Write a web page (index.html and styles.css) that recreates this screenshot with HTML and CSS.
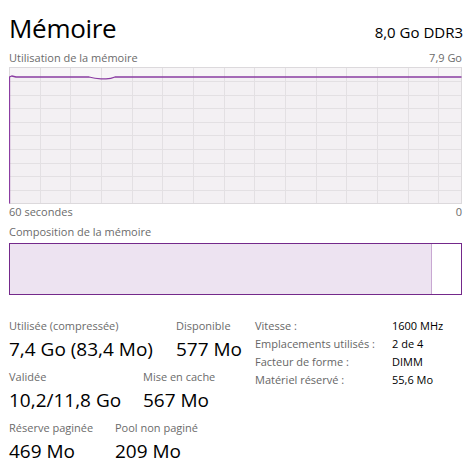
FILE: index.html
```html
<!DOCTYPE html>
<html lang="fr">
<head>
<meta charset="utf-8">
<title>Mémoire</title>
<link rel="stylesheet" href="styles.css">
</head>
<body>
<div class="page">
  <div class="header">
    <div class="title">Mémoire</div>
    <div class="subtitle">8,0 Go DDR3</div>
  </div>

  <div class="caption-row graph-head">
    <span>Utilisation de la mémoire</span>
    <span>7,9 Go</span>
  </div>
  <svg class="graph" width="453" height="137" viewBox="0 0 453 137" shape-rendering="crispEdges">
    <rect x="0" y="0" width="453" height="137" fill="#f7f5f7"/>
    <path class="fill" d="M0.5,10 L3,9 L7,10 L80,10 L86,11.5 L98,11.5 L104,10 L452.5,10 L452.5,136.5 L0.5,136.5 Z" fill="#f3f0f3"/>
    <g stroke="#e3e0e3" stroke-width="1">
      <line x1="31.5" y1="0" x2="31.5" y2="137"/>
      <line x1="61.5" y1="0" x2="61.5" y2="137"/>
      <line x1="92.5" y1="0" x2="92.5" y2="137"/>
      <line x1="123.5" y1="0" x2="123.5" y2="137"/>
      <line x1="153.5" y1="0" x2="153.5" y2="137"/>
      <line x1="184.5" y1="0" x2="184.5" y2="137"/>
      <line x1="215.5" y1="0" x2="215.5" y2="137"/>
      <line x1="245.5" y1="0" x2="245.5" y2="137"/>
      <line x1="276.5" y1="0" x2="276.5" y2="137"/>
      <line x1="307.5" y1="0" x2="307.5" y2="137"/>
      <line x1="337.5" y1="0" x2="337.5" y2="137"/>
      <line x1="368.5" y1="0" x2="368.5" y2="137"/>
      <line x1="399.5" y1="0" x2="399.5" y2="137"/>
      <line x1="429.5" y1="0" x2="429.5" y2="137"/>
      <line x1="0" y1="14.5" x2="453" y2="14.5"/>
      <line x1="0" y1="28.5" x2="453" y2="28.5"/>
      <line x1="0" y1="41.5" x2="453" y2="41.5"/>
      <line x1="0" y1="55.5" x2="453" y2="55.5"/>
      <line x1="0" y1="68.5" x2="453" y2="68.5"/>
      <line x1="0" y1="82.5" x2="453" y2="82.5"/>
      <line x1="0" y1="96.5" x2="453" y2="96.5"/>
      <line x1="0" y1="109.5" x2="453" y2="109.5"/>
      <line x1="0" y1="123.5" x2="453" y2="123.5"/>
    </g>
    <rect x="0.5" y="0.5" width="452" height="136" fill="none" stroke="#dcd9dc"/>
    <path d="M0.5,136.5 L0.5,10 L3,9 L7,10 L80,10 Q86,11.8 92,11.8 L97,11.8 Q102,11.8 106,10 L452.5,10" fill="none" stroke="#8b3ca2" stroke-width="1.3" shape-rendering="geometricPrecision"/>
  </svg>
  <div class="caption-row axis">
    <span>60 secondes</span>
    <span>0</span>
  </div>

  <div class="caption-row comp-head">
    <span>Composition de la mémoire</span>
  </div>
  <div class="comp">
    <div class="comp-used"></div>
  </div>

  <div class="stats">
    <div class="stats-left">
      <div class="stat-row">
        <div class="stat w-used">
          <div class="stat-label">Utilisée (compressée)</div>
          <div class="stat-value">7,4 Go (83,4 Mo)</div>
        </div>
        <div class="stat">
          <div class="stat-label">Disponible</div>
          <div class="stat-value">577 Mo</div>
        </div>
      </div>
      <div class="stat-row">
        <div class="stat w-commit">
          <div class="stat-label">Validée</div>
          <div class="stat-value">10,2/11,8 Go</div>
        </div>
        <div class="stat">
          <div class="stat-label">Mise en cache</div>
          <div class="stat-value">567 Mo</div>
        </div>
      </div>
      <div class="stat-row">
        <div class="stat w-paged">
          <div class="stat-label">Réserve paginée</div>
          <div class="stat-value">469 Mo</div>
        </div>
        <div class="stat">
          <div class="stat-label">Pool non paginé</div>
          <div class="stat-value">209 Mo</div>
        </div>
      </div>
    </div>
    <div class="specs">
      <div class="spec-label">Vitesse :</div><div class="spec-value">1600 MHz</div>
      <div class="spec-label">Emplacements utilisés :</div><div class="spec-value">2 de 4</div>
      <div class="spec-label">Facteur de forme :</div><div class="spec-value">DIMM</div>
      <div class="spec-label">Matériel réservé :</div><div class="spec-value">55,6 Mo</div>
    </div>
  </div>
</div>
</body>
</html>
```
FILE: styles.css
```css
html, body {
  margin: 0;
  padding: 0;
  background: #ffffff;
}

body {
  font-family: "Open Sans", "Noto Sans", "Liberation Sans", sans-serif;
  color: #000000;
  width: 471px;
  height: 473px;
  overflow: hidden;
}

.page {
  padding: 13px 9px 0 9px;
}

.header {
  display: flex;
  justify-content: space-between;
  align-items: baseline;
  height: 30px;
}

.title {
  font-size: 26px;
  line-height: 30px;
  font-weight: 400;
  letter-spacing: -0.3px;
}

.subtitle {
  font-size: 15px;
  line-height: 30px;
  margin-right: -1px;
}

.caption-row {
  display: flex;
  justify-content: space-between;
  font-size: 11px;
  line-height: 14px;
  color: #6b6b6b;
}

.graph-head {
  margin-top: 8px;
}

.graph {
  display: block;
  margin-top: 2px;
}

.axis {
  margin-top: 1px;
}

.comp-head {
  margin-top: 6px;
}

.comp {
  margin-top: 4px;
  height: 52px;
  box-sizing: border-box;
  border: 1px solid #74298b;
  display: flex;
}

.comp-used {
  width: 421px;
  background: #ede3f1;
  border-right: 1px solid #c8a8d2;
}

.stats {
  margin-top: 22px;
  display: flex;
  align-items: flex-start;
}

.stats-left {
  width: 246px;
  padding-top: 2px;
}

.stat-row {
  display: flex;
  margin-bottom: 9px;
}

.stat-label {
  font-size: 11px;
  line-height: 14px;
  color: #6b6b6b;
  white-space: nowrap;
}

.stat-value {
  margin-top: 4px;
  font-size: 19px;
  line-height: 24px;
  white-space: nowrap;
}

.w-used {
  width: 167px;
}

.w-commit {
  width: 134px;
}

.w-paged {
  width: 106px;
}

.specs {
  display: grid;
  grid-template-columns: 137px auto;
  align-content: start;
  font-size: 11px;
  line-height: 18px;
}

.spec-label {
  color: #666666;
  white-space: nowrap;
}

.spec-value {
  color: #000000;
  white-space: nowrap;
}
```
